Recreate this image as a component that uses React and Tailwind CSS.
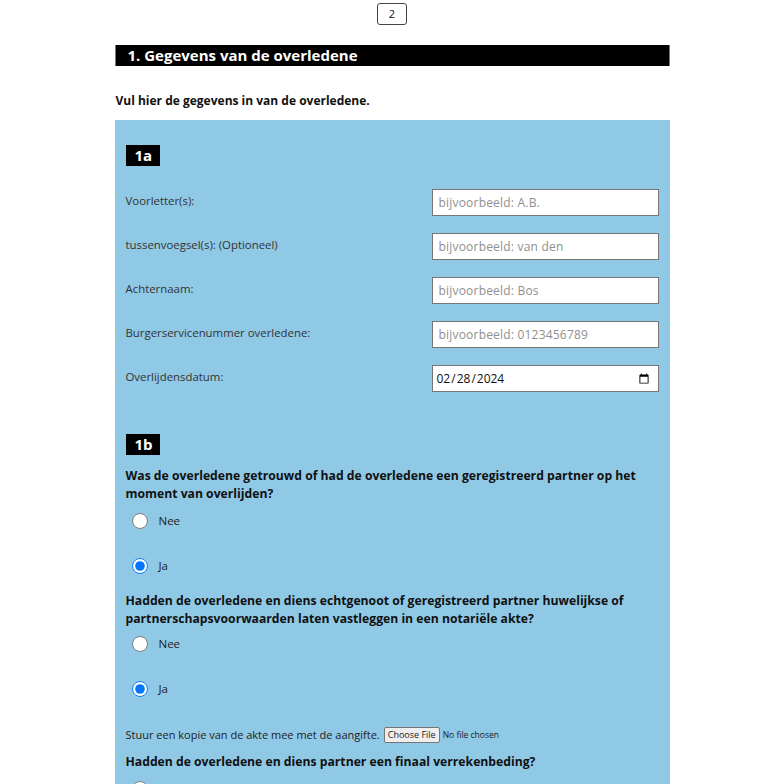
import { useState } from "react";

const fields = [
  { label: "Voorletter(s):", placeholder: "bijvoorbeeld: A.B." },
  { label: "tussenvoegsel(s): (Optioneel)", placeholder: "bijvoorbeeld: van den" },
  { label: "Achternaam:", placeholder: "bijvoorbeeld: Bos" },
  { label: "Burgerservicenummer overledene:", placeholder: "bijvoorbeeld: 0123456789" },
];

const Badge = ({ children }) => (
  <div className="w-[34px] h-[21px] bg-black text-white font-bold text-[15px] leading-[21px] pl-[9px]">
    {children}
  </div>
);

const RadioPair = ({ name, value, onChange }) => (
  <div className="flex flex-col gap-[29px]">
    {["Nee", "Ja"].map((opt) => (
      <label key={opt} className="flex items-center h-4 text-[11.5px] text-[#222]">
        <input
          type="radio"
          name={name}
          checked={value === opt}
          onChange={() => onChange(opt)}
          className="w-4 h-4 m-0 ml-[6px] mr-[11px]"
        />
        {opt}
      </label>
    ))}
  </div>
);

const App = () => {
  const [married, setMarried] = useState("Ja");
  const [akte, setAkte] = useState("Ja");
  const [finaal, setFinaal] = useState("");

  return (
    <div className="bg-white min-h-screen font-['Open_Sans',sans-serif] text-[#111]">
      {/* Page number */}
      <div className="flex justify-center pt-[3px]">
        <button className="w-[30px] h-[22px] border border-[#444] rounded-[3px] text-[11px] bg-white">
          2
        </button>
      </div>

      <div className="w-[555px] mx-auto">
        <h2 className="mt-[20px] h-[21px] bg-black text-white font-bold text-[15px] leading-[21px] px-3 border-x border-[#777]">
          1. Gegevens van de overledene
        </h2>
        <p className="mt-[27px] font-bold text-[12px] leading-[16px] pl-[1px]">
          Vul hier de gegevens in van de overledene.
        </p>

        <div className="mt-[11px] bg-[#8fc9e6] px-[11px] pt-[25px] pb-8">
          {/* 1a */}
          <Badge>1a</Badge>
          <div className="mt-[23px] flex flex-col gap-[17px]">
            {fields.map((f) => (
              <div key={f.label} className="flex items-center justify-between">
                <span className="text-[11.4px] text-[#333] -mt-[3px]">{f.label}</span>
                <input
                  type="text"
                  placeholder={f.placeholder}
                  className="w-[227px] h-[27px] bg-white border border-[#767676] px-[6px] text-[12px] tracking-[0.2px] placeholder:text-[#8f8f8f] outline-none"
                />
              </div>
            ))}
            <div className="flex items-center justify-between">
              <span className="text-[11.4px] text-[#333] -mt-[3px]">Overlijdensdatum:</span>
              <input
                type="date"
                defaultValue="2024-02-28"
                className="w-[227px] h-[27px] bg-white border border-[#767676] pl-[3px] pr-[6px] text-[12px]"
              />
            </div>
          </div>

          {/* 1b */}
          <div className="mt-[42px]">
            <Badge>1b</Badge>
          </div>
          <p className="mt-[12px] font-bold text-[12.2px] leading-[18px]">
            Was de overledene getrouwd of had de overledene een geregistreerd partner op het moment
            van overlijden?
          </p>
          <div className="mt-[10px]">
            <RadioPair name="married" value={married} onChange={setMarried} />
          </div>

          <p className="mt-[18px] font-bold text-[12.2px] leading-[18px]">
            Hadden de overledene en diens echtgenoot of geregistreerd partner huwelijkse of
            partnerschapsvoorwaarden laten vastleggen in een notariële akte?
          </p>
          <div className="mt-[8px]">
            <RadioPair name="akte" value={akte} onChange={setAkte} />
          </div>

          <div className="mt-[29px] h-[18px] flex items-center text-[11px] text-[#222]">
            <span>Stuur een kopie van de akte mee met de aangifte.</span>
            <input type="file" className="ml-[4px] text-[8.5px] file:text-[9px] file:px-[3px] file:py-0 file:mr-[3px] file:border file:border-[#767676] file:rounded-[2px] file:bg-[#efefef]" />
          </div>

          <p className="mt-[9px] font-bold text-[12.2px] leading-[18px]">
            Hadden de overledene en diens partner een finaal verrekenbeding?
          </p>
          <div className="mt-[10px]">
            <RadioPair name="finaal" value={finaal} onChange={setFinaal} />
          </div>
        </div>
      </div>
    </div>
  );
};

export default App;
